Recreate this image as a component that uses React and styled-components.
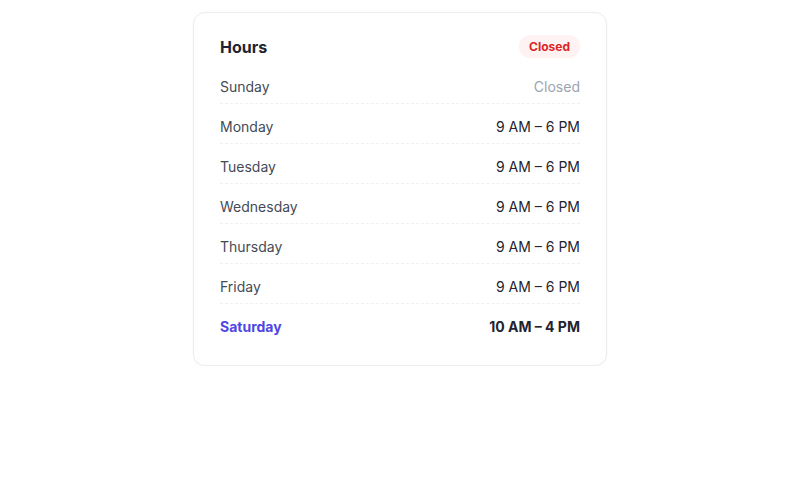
import React from "react";
import styled, { createGlobalStyle } from "styled-components";

const GlobalStyle = createGlobalStyle`
  body {
    margin: 0;
    background: #ffffff;
    font-family: Inter, "Liberation Sans", sans-serif;
  }
`;

const hours = [
  { day: "Sunday", time: "Closed", closed: true },
  { day: "Monday", time: "9 AM – 6 PM" },
  { day: "Tuesday", time: "9 AM – 6 PM" },
  { day: "Wednesday", time: "9 AM – 6 PM" },
  { day: "Thursday", time: "9 AM – 6 PM" },
  { day: "Friday", time: "9 AM – 6 PM" },
  { day: "Saturday", time: "10 AM – 4 PM", today: true },
];

export default function App() {
  return (
    <>
      <GlobalStyle />
      <Page>
        <Card>
          <Header>
            <Title>Hours</Title>
            <Badge>Closed</Badge>
          </Header>
          <List>
            {hours.map((h) => (
              <Row key={h.day}>
                <Day $today={h.today}>{h.day}</Day>
                <Time $today={h.today} $closed={h.closed}>
                  {h.time}
                </Time>
              </Row>
            ))}
          </List>
        </Card>
      </Page>
    </>
  );
}

const Page = styled.div`
  display: flex;
  justify-content: center;
  padding-top: 12px;
`;

const Card = styled.div`
  width: 360px;
  padding: 22px 26px 22px;
  border: 1px solid #ececec;
  border-radius: 12px;
  background: #fff;
  box-shadow: 0 1px 2px rgba(0, 0, 0, 0.03);
`;

const Header = styled.div`
  display: flex;
  justify-content: space-between;
  align-items: center;
  height: 23px;
  margin-bottom: 6px;
`;

const Title = styled.h2`
  margin: 0;
  font-size: 16px;
  font-weight: 700;
  color: #1f2430;
`;

const Badge = styled.span`
  padding: 3px 10px;
  border-radius: 999px;
  background: #fef2f2;
  color: #dc2626;
  font-size: 12px;
  font-weight: 700;
  line-height: 17px;
`;

const List = styled.div`
  display: flex;
  flex-direction: column;
`;

const Row = styled.div`
  display: flex;
  justify-content: space-between;
  align-items: center;
  padding: 13px 0 6px;
  line-height: 20px;
  font-size: 14px;
  border-bottom: 1px dashed #eef0f3;

  &:last-child {
    border-bottom: none;
  }
`;

const Day = styled.span`
  color: ${(p) => (p.$today ? "#4f46e5" : "#444b57")};
  font-weight: ${(p) => (p.$today ? 700 : 400)};
`;

const Time = styled.span`
  color: ${(p) => (p.$closed ? "#9ca3af" : "#1f2430")};
  font-weight: ${(p) => (p.$today ? 700 : 400)};
`;
